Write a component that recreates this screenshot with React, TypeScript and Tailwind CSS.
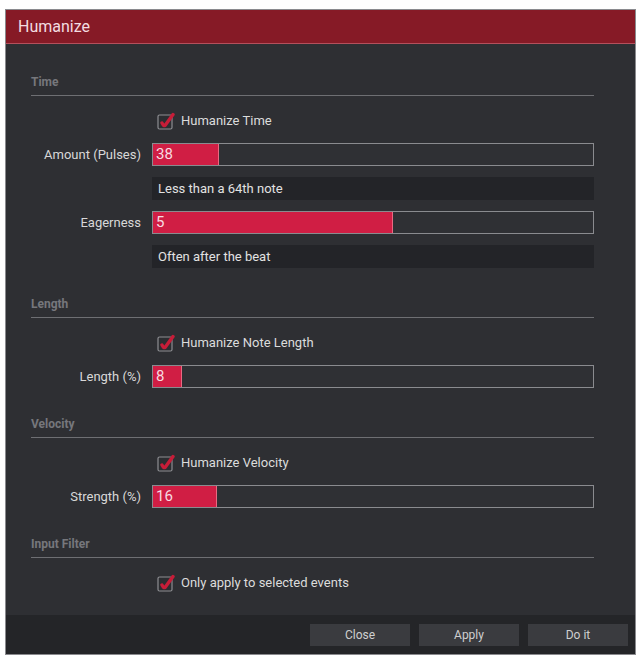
const font = { fontFamily: 'Roboto, "Liberation Sans", sans-serif' };

function Check() {
  return (
    <svg width="18" height="18" viewBox="0 0 18 18" className="shrink-0">
      <rect x="1" y="3" width="14" height="14" rx="1.5" fill="#2c2d31" stroke="#8d8e92" strokeWidth="1.2" />
      <path d="M5 11 L6.5 13.5 L8 13.5 L16 2.5" fill="none" stroke="#c61d38" strokeWidth="3.4" strokeLinecap="round" strokeLinejoin="round" />
    </svg>
  );
}

function SectionHeader({ title, first }: { title: string; first?: boolean }) {
  return (
    <div className={`${first ? 'mt-[30px]' : 'mt-[28px]'} border-b border-[#6e6f73] pb-[5px]`}>
      <div className="text-[12px] leading-[16px] font-bold text-[#76777c]">{title}</div>
    </div>
  );
}

function CheckRow({ label }: { label: string }) {
  return (
    <div className="mt-[13px] flex h-[23px] items-center">
      <div className="w-[126px] shrink-0" />
      <Check />
      <span className="ml-[6px] text-[13px] text-[#dcdcdc]">{label}</span>
    </div>
  );
}

function Bar({ label, value, pct }: { label: string; value: string; pct: number }) {
  return (
    <div className="mt-[11px] flex h-[23px] items-center">
      <div className="w-[110px] shrink-0 text-right text-[13px] text-[#d8d8d8]">{label}</div>
      <div className="ml-[11px] relative h-[23px] flex-1 border border-[#8a8b8f] bg-[#2f3034]">
        <div className="h-full bg-[#d01e44] border-r border-[#e86a82]" style={{ width: `${pct}%` }} />
        <span className="absolute left-[3px] top-0 text-[15px] leading-[21px] text-[#f7dbe1]">{value}</span>
      </div>
    </div>
  );
}

function Info({ text }: { text: string }) {
  return (
    <div className="mt-[11px] flex h-[23px] items-center">
      <div className="w-[121px] shrink-0" />
      <div className="flex h-full flex-1 items-center bg-[#232428] pl-[6px] text-[13px] text-[#e2e2e2]">{text}</div>
    </div>
  );
}

export default function App() {
  return (
    <div className="min-h-[663px] bg-white pl-[5px] pt-[9px]" style={font}>
      <div className="flex h-[646px] w-[631px] flex-col border border-[#8a8a8e] bg-[#2e2f33]">
        <div className="flex h-[34px] shrink-0 items-center border-b border-[#b4505c] bg-[#861a26] pl-[12px] text-[16px] text-[#f3dde1]">
          Humanize
        </div>
        <div className="flex-1 pl-[25px] pr-[41px]">
          <SectionHeader title="Time" first />
          <CheckRow label="Humanize Time" />
          <Bar label="Amount (Pulses)" value="38" pct={15} />
          <Info text="Less than a 64th note" />
          <Bar label="Eagerness" value="5" pct={54.5} />
          <Info text="Often after the beat" />

          <SectionHeader title="Length" />
          <CheckRow label="Humanize Note Length" />
          <Bar label="Length (%)" value="8" pct={6.6} />

          <SectionHeader title="Velocity" />
          <CheckRow label="Humanize Velocity" />
          <Bar label="Strength (%)" value="16" pct={14.5} />

          <SectionHeader title="Input Filter" />
          <CheckRow label="Only apply to selected events" />
        </div>
        <div className="flex h-[39px] shrink-0 items-center justify-end gap-[9px] bg-[#242528] pr-[7px]">
          {['Close', 'Apply', 'Do it'].map((b) => (
            <button key={b} className="h-[22px] w-[100px] bg-[#3a3b3f] text-[12px] text-[#cfcfcf]">
              {b}
            </button>
          ))}
        </div>
      </div>
    </div>
  );
}
